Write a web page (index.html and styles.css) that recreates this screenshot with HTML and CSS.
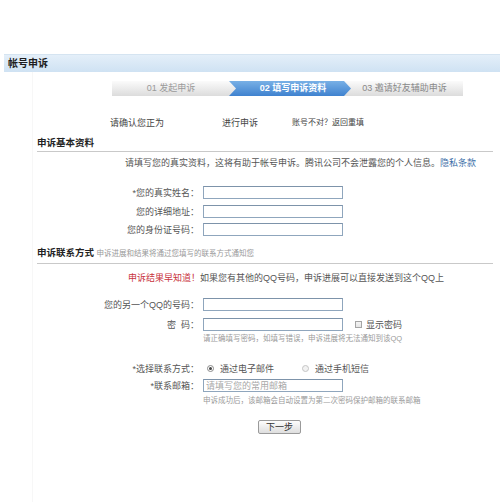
FILE: index.html
```html
<!DOCTYPE html>
<html lang="zh-CN">
<head>
<meta charset="utf-8">
<title>帐号申诉</title>
<link rel="stylesheet" href="styles.css">
</head>
<body>
<div class="page">
  <div class="titlebar">帐号申诉</div>
  <div class="main">
    <div class="steps">
      <div class="step step-done"><span>01 发起申诉</span></div>
      <div class="step step-active"><span>02 填写申诉资料</span></div>
      <div class="step step-next"><span>03 邀请好友辅助申诉</span></div>
    </div>

    <div class="confirm">
      <span class="c1">请确认您正为</span>
      <span class="c2">进行申诉</span>
      <span class="c3">账号不对？返回重填</span>
    </div>

    <div class="section-head sh1"><b>申诉基本资料</b></div>
    <div class="info">请填写您的真实资料，这将有助于帐号申诉。腾讯公司不会泄露您的个人信息。<span class="link">隐私条款</span></div>

    <div class="form-block fb1">
      <div class="row"><label class="lbl">*您的真实姓名：</label><input class="field" type="text"></div>
      <div class="row"><label class="lbl">您的详细地址：</label><input class="field" type="text"></div>
      <div class="row"><label class="lbl">您的身份证号码：</label><input class="field" type="text"></div>
    </div>

    <div class="section-head sh2"><b>申诉联系方式</b> <span class="sub">申诉进展和结果将通过您填写的联系方式通知您</span></div>
    <div class="notice"><span class="red">申诉结果早知道！</span>如果您有其他的QQ号码，申诉进展可以直接发送到这个QQ上</div>

    <div class="row row-qq"><label class="lbl">您的另一个QQ的号码：</label><input class="field" type="text"></div>
    <div class="row row-pw"><label class="lbl">密&nbsp;&nbsp;码：</label><input class="field" type="password"><span class="check"></span><span class="check-lbl">显示密码</span></div>
    <div class="hint">请正确填写密码，如填写错误，申诉进展将无法通知到该QQ</div>

    <div class="row row-radio">
      <label class="lbl">*选择联系方式：</label>
      <span class="radio on"></span><span class="r-lbl">通过电子邮件</span>
      <span class="radio"></span><span class="r-lbl">通过手机短信</span>
    </div>
    <div class="row row-mail"><label class="lbl">*联系邮箱：</label><input class="field" type="text" placeholder="请填写您的常用邮箱"></div>
    <div class="hint">申诉成功后，该邮箱会自动设置为第二次密码保护邮箱的联系邮箱</div>

    <div class="btn-row"><button class="btn" type="button">下一步</button></div>
  </div>
</div>
</body>
</html>
```

FILE: styles.css
```css
* { box-sizing: border-box; }
html, body { margin: 0; padding: 0; background: #fff; }
body {
  font-family: "Liberation Sans", "Noto Sans CJK SC", sans-serif;
  font-size: 9px;
  color: #444;
}
.page { padding-top: 54px; width: 500px; height: 502px; overflow: hidden; }

.titlebar {
  margin-left: 4px;
  height: 18px;
  line-height: 18px;
  padding-left: 4px;
  font-size: 10px;
  font-weight: bold;
  color: #1d1d1d;
  background: linear-gradient(#e4eff9, #cfe2f3);
  border-top: 1px solid #d5e4f1;
}

.main {
  margin-left: 32px;
  border-left: 1px solid #f7f7f7;
  height: 430px;
  padding-top: 9px;
}

.steps {
  display: flex;
  margin-left: 79px;
  width: 351px;
  height: 15px;
}
.step {
  height: 15px;
  line-height: 15px;
  font-size: 9px;
  text-align: center;
  position: relative;
}
.step-done {
  width: 124px;
  z-index: 3;
  color: #9a9a9a;
  background: linear-gradient(#fbfbfb, #dcdcdc);
  clip-path: polygon(0 0, calc(100% - 7px) 0, 100% 50%, calc(100% - 7px) 100%, 0 100%);
  padding-right: 6px;
}
.step-active {
  width: 122px;
  margin-left: -7px;
  z-index: 2;
  color: #fff;
  font-weight: bold;
  background: linear-gradient(#78b0e6, #3f82cf);
  clip-path: polygon(0 0, calc(100% - 7px) 0, 100% 50%, calc(100% - 7px) 100%, 0 100%);
  padding-left: 6px;
}
.step-next {
  width: 119px;
  margin-left: -7px;
  z-index: 1;
  color: #888;
  background: linear-gradient(#fbfbfb, #dcdcdc);
  padding-left: 2px;
}

.confirm {
  display: flex;
  margin-top: 21px;
  margin-left: 77px;
  height: 12px;
  line-height: 12px;
}
.confirm .c1 { width: 112px; }
.confirm .c2 { width: 70px; }
.confirm .c3 { font-size: 8px; color: #444; }

.section-head {
  margin-left: 4px;
  width: 456px;
  line-height: 12px;
  border-bottom: 1px solid #c9c9c9;
}
.section-head b { font-size: 9.5px; color: #222; }
.sh1 { margin-top: 8px; padding-bottom: 2px; }
.sh2 { margin-top: 11px; padding-bottom: 3px; }
.section-head .sub { font-size: 7.5px; color: #999; }

.info {
  margin-top: 5px;
  margin-left: 92px;
  line-height: 12px;
  color: #555;
}
.link { color: #3c6fa8; }

.fb1 {
  margin-top: 17px;
  display: flex;
  flex-direction: column;
  gap: 5.5px;
}
.row {
  display: flex;
  align-items: center;
  height: 13px;
}
.lbl {
  width: 167px;
  padding-right: 1px;
  text-align: right;
  margin-right: 3px;
  color: #555;
}
.field {
  width: 140px;
  height: 13px;
  margin: 0;
  padding: 0 2px;
  border: 1px solid #8fa6bd;
  border-top-color: #7d93aa;
  background: #fff;
  font-family: inherit;
  font-size: 9px;
  color: #333;
  outline: none;
}
.field::placeholder { color: #a8a8a8; }

.notice {
  margin-top: 8px;
  margin-left: 95px;
  line-height: 12px;
  color: #555;
}
.red { color: #c8323c; }

.row-qq { margin-top: 14px; }
.row-pw { margin-top: 7px; }
.check {
  width: 7px;
  height: 7px;
  margin-left: 12px;
  border: 1px solid #a5a5a5;
  background: linear-gradient(#f4f4f4, #e6e6e6);
}
.check-lbl { margin-left: 4px; color: #555; }

.hint {
  margin-top: 3px;
  margin-left: 170px;
  line-height: 10px;
  font-size: 7.5px;
  color: #9a9a9a;
  white-space: nowrap;
}

.row-radio { margin-top: 18px; height: 12px; }
.radio {
  width: 7px;
  height: 7px;
  border-radius: 50%;
  border: 1px solid #c5c5c5;
  background: #f2f2f2;
  margin-left: 4px;
  display: flex;
  align-items: center;
  justify-content: center;
}
.radio.on { border-color: #8a8a8a; background: #fff; }
.radio.on::after {
  content: "";
  width: 3px;
  height: 3px;
  border-radius: 50%;
  background: #444;
}
.r-lbl { margin-left: 6px; width: 78px; color: #555; }

.row-mail { margin-top: 5px; }
.row-mail + .hint { margin-top: 4px; }

.btn-row { margin-top: 14px; margin-left: 225px; }
.btn {
  width: 43px;
  height: 14px;
  padding: 0;
  font-family: inherit;
  font-size: 9px;
  line-height: 12px;
  color: #333;
  border: 1px solid #9a9a9a;
  border-radius: 2px;
  background: linear-gradient(#fdfdfd, #dedede);
}
```
